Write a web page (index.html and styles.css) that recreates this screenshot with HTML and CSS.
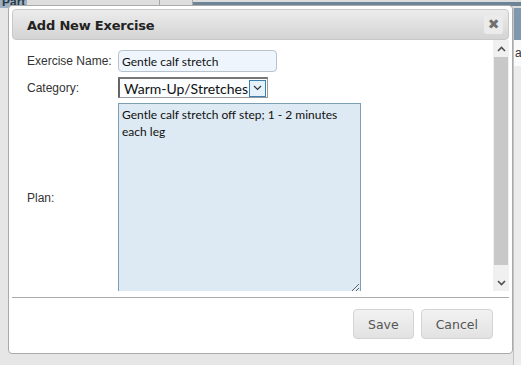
FILE: index.html
```html
<!DOCTYPE html>
<html lang="en">
<head>
  <meta charset="UTF-8" />
  <title>Add New Exercise</title>
  <link rel="stylesheet" href="styles.css">
</head>
<body>

<!-- page behind the modal -->
<div class="page">
  <div class="topbar">
    <div class="cell part">Part</div>
    <div class="cell light"></div>
    <div class="cell light narrow"></div>
    <div class="cell dark"></div>
  </div>
  <div class="under">
    <div class="under-left"></div>
    <div class="under-right">
      <div class="side-head"></div>
      <div class="side-text">a<span>l</span></div>
      <div class="side-rest"></div>
    </div>
  </div>
</div>

<div class="dialog">
  <div class="titlebar">
    <span class="title">Add New Exercise</span>
    <button class="close" type="button">&#10006;</button>
  </div>

  <div class="content">
    <div class="scroll-body">
      <form class="form">
        <label class="lbl" for="exName">Exercise Name:</label>
        <div><input id="exName" class="text-input" type="text" value="Gentle calf stretch"></div>

        <label class="lbl" for="exCat">Category:</label>
        <div>
          <div class="select" id="exCat">
            <span class="select-value">Warm-Up/Stretches</span>
            <span class="select-arrow">
              <svg width="9" height="6" viewBox="0 0 9 6"><path d="M1 1 L4.5 4.5 L8 1" fill="none" stroke="#333" stroke-width="1.2"/></svg>
            </span>
          </div>
        </div>

        <label class="lbl plan-lbl" for="exPlan">Plan:</label>
        <div><textarea id="exPlan" class="plan">Gentle calf stretch off step; 1 - 2 minutes each leg</textarea></div>
      </form>
    </div>
    <div class="scrollbar">
      <div class="sb-btn">
        <svg width="9" height="6" viewBox="0 0 9 6"><path d="M1 5 L4.5 1.5 L8 5" fill="none" stroke="#505050" stroke-width="1.6"/></svg>
      </div>
      <div class="sb-thumb"></div>
      <div class="sb-track"></div>
      <div class="sb-btn">
        <svg width="9" height="6" viewBox="0 0 9 6"><path d="M1 1 L4.5 4.5 L8 1" fill="none" stroke="#505050" stroke-width="1.6"/></svg>
      </div>
    </div>
  </div>

  <div class="buttonpane">
    <button class="btn" type="button">Save</button>
    <button class="btn" type="button">Cancel</button>
  </div>
</div>

</body>
</html>
```

FILE: styles.css
```css
* { margin: 0; padding: 0; box-sizing: border-box; }
html, body {
  width: 521px;
  height: 365px;
  overflow: hidden;
}
body {
  font-family: 'Liberation Sans', Arial, sans-serif;
  background: #e6e6e6;
  color: #333;
  position: relative;
}

/* Page behind the dialog */
.page {
  display: flex;
  flex-direction: column;
  height: 365px;
}
.topbar {
  display: flex;
  height: 8px;
  overflow: hidden;
}
.cell {
  height: 8px;
}
.cell.part {
  width: 27px;
  background: #9db1c2;
  color: #2a3a48;
  font-size: 12px;
  font-weight: bold;
  line-height: 4px;
  padding-left: 2px;
  overflow: hidden;
}
.cell.light {
  width: 133px;
  background: #dedede;
  border-right: 1px solid #a8a8a8;
}
.cell.light.narrow {
  width: 33px;
}
.cell.dark {
  flex: 1;
  background: #dcdcdc;
  border-top: 2px solid #dcdcdc;
  border-bottom: 2px solid #dcdcdc;
  box-shadow: inset 0 0 0 4px #6d8396;
}
.under {
  flex: 1;
  display: flex;
}
.under-left {
  flex: 1;
  background: #e6e6e6;
}
.under-right {
  width: 8px;
  display: flex;
  flex-direction: column;
  background: #ececec;
  border-left: 1px solid #c4c4c4;
}
.side-head {
  height: 32px;
  background: #7f98ad;
}
.side-text {
  height: 26px;
  background: #fafafa;
  font-size: 12px;
  line-height: 26px;
  padding-left: 1px;
  color: #333;
}
.side-text span { color: #d07a2a; }
.side-rest { flex: 1; }

/* Dialog */
.dialog {
  position: absolute;
  left: 8px;
  top: 5px;
  width: 505px;
  height: 349px;
  background: #fff;
  border: 1px solid #aaa;
  border-radius: 4px;
  padding: 3px;
  display: flex;
  flex-direction: column;
}
.titlebar {
  height: 31px;
  display: flex;
  align-items: center;
  justify-content: space-between;
  padding: 2px 5px 0 14px;
  border: 1px solid #c8c8c8;
  border-radius: 4px;
  background: linear-gradient(#ececec, #d4d4d4);
}
.title {
  font-family: 'DejaVu Sans', Verdana, sans-serif;
  font-weight: bold;
  font-size: 13px;
  color: #222;
  letter-spacing: -0.2px;
}
.close {
  width: 19px;
  height: 19px;
  margin-top: -2px;
  border: none;
  border-radius: 3px;
  background: #ebebeb;
  color: #707070;
  font-size: 14px;
  line-height: 19px;
  text-align: center;
  font-family: 'DejaVu Sans', sans-serif;
}

.content {
  height: 251px;
  display: flex;
}
.scroll-body {
  flex: 1;
  overflow: hidden;
  padding: 10px 0 0 15px;
}
.form {
  display: grid;
  grid-template-columns: 91px auto;
  row-gap: 5px;
  align-items: center;
}
.lbl {
  font-size: 12px;
  color: #333;
}
.text-input {
  display: block;
  width: 159px;
  height: 22px;
  border: 1px solid #b9c3ce;
  border-radius: 4px;
  background: #eef5fd;
  padding: 0 3px;
  font-family: Lato, 'Noto Sans', sans-serif;
  font-size: 12px;
  color: #111;
}
.select {
  width: 150px;
  height: 21px;
  display: flex;
  align-items: center;
  justify-content: space-between;
  border: 1px solid #9a9a9a;
  border-left: 2px solid #666;
  border-top: 2px solid #777;
  background: #fbfdff;
  padding: 0 1px 0 4px;
  overflow: hidden;
}
.select-value {
  font-family: Lato, 'Noto Sans', sans-serif;
  font-size: 14px;
  color: #111;
  line-height: 17px;
  white-space: nowrap;
}
.select-arrow {
  flex: none;
  width: 17px;
  height: 17px;
  display: flex;
  align-items: center;
  justify-content: center;
  border: 1px solid #3c7fb1;
  background: #e5f1fb;
}
.plan {
  display: block;
  width: 243px;
  height: 190px;
  border: 1px solid #7b9fb3;
  background: #dde9f3;
  padding: 2px 3px;
  font-family: Lato, 'Noto Sans', sans-serif;
  font-size: 12px;
  line-height: 17px;
  color: #111;
  resize: both;
}

/* Fake scrollbar of the content area */
.scrollbar {
  width: 16px;
  display: flex;
  flex-direction: column;
  background: #f0f0f0;
}
.sb-btn {
  height: 17px;
  display: flex;
  align-items: center;
  justify-content: center;
}
.sb-thumb {
  height: 208px;
  margin: 0 1px;
  background: #c8c8c8;
}
.sb-track {
  flex: 1;
}

.buttonpane {
  margin-top: 6px;
  border-top: 1px solid #aaa;
  flex: 1;
  display: flex;
  justify-content: flex-end;
  align-items: flex-start;
  gap: 7px;
  padding: 11px 16px 0 0;
}
.btn {
  height: 30px;
  padding: 0 14px;
  border: 1px solid #d3d3d3;
  border-radius: 4px;
  background: linear-gradient(#f2f2f2, #e2e2e2);
  color: #555;
  font-family: 'DejaVu Sans', Verdana, sans-serif;
  font-size: 12.5px;
}
```
